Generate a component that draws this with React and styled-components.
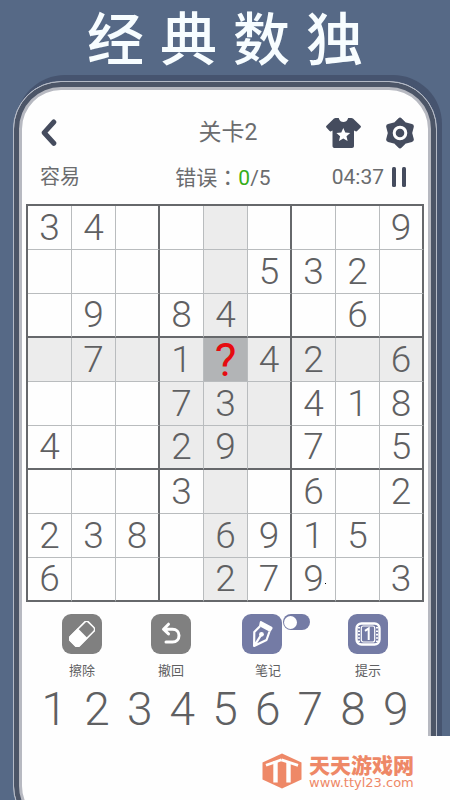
import React, { useState } from "react";
import styled, { createGlobalStyle, css } from "styled-components";

const ink = "#454c5e";
const gray = "#5f6062";
const sans = `Roboto, "Noto Sans CJK SC", sans-serif`;

const GlobalStyle = createGlobalStyle`
  *, *::before, *::after { box-sizing: border-box; }
  body { margin: 0; background: #566986; font-family: ${sans}; color: ${gray}; }
  button { margin: 0; padding: 0; border: 0; background: none; color: inherit; font: inherit; cursor: pointer; }
  svg { display: block; }
`;

const Page = styled.main`
  position: relative;
  display: flex;
  flex-direction: column;
  min-height: 100vh;
  overflow: hidden;
`;

const Headline = styled.h1`
  display: flex;
  justify-content: center;
  gap: 16px;
  margin: 0;
  height: 81px;
  font: 500 57px/70px "Noto Sans CJK SC", sans-serif;
  color: #f7fdff;
`;

const Phone = styled.section`
  flex: 1;
  margin: 0 13px -34px;
  padding: 8px;
  border: 1px solid #b3b9c6;
  border-radius: 48px;
  background: #fefefe;
  box-shadow: inset 0 0 0 5px #4c5567, inset 0 0 0 8px #b7b9c1, 4px -5px 0 1px #46546f;
`;

const Screen = styled.div`
  display: flex;
  flex-direction: column;
  padding: 20px 4px 63px;
`;

const Bar = styled.header`
  display: grid;
  grid-template-columns: 1fr auto 1fr;
  align-items: center;
  height: 45px;
  padding: 0 9px 0 15px;
`;

const LevelName = styled.h2`
  margin: 0;
  font: 400 23px/32px ${sans};
  color: #6b6c6e;
`;

const IconButton = styled.button`
  display: grid;
  place-items: center;
`;

const BackButton = styled(IconButton)`
  justify-self: start;
`;

const Actions = styled.div`
  display: flex;
  justify-content: flex-end;
  align-items: center;
  gap: 24px;
`;

const Status = styled.div`
  display: grid;
  grid-template-columns: 1fr auto 1fr;
  align-items: center;
  height: 44px;
  margin-bottom: 5px;
  padding: 0 18px 0 14px;
  font-size: 20px;
  line-height: 28px;
  color: #6b6c6e;
`;

const Mistakes = styled.span`
  font-size: 21px;
`;

const Colon = styled.span`
  font-family: "Noto Sans CJK TC", sans-serif;
`;

const Count = styled.span`
  color: #35ad18;
`;

const Timer = styled.div`
  display: flex;
  justify-content: flex-end;
  align-items: center;
  gap: 8px;
  font-size: 21px;
`;

const Board = styled.div`
  display: grid;
  grid-template-columns: repeat(9, 1fr);
  border-top: 2px solid #66686b;
  border-left: 2px solid #66686b;
`;

const Cell = styled.button`
  position: relative;
  aspect-ratio: 1;
  display: grid;
  place-items: center;
  min-width: 0;
  border-style: solid;
  border-color: ${(p) => `#b9bcbe ${p.$edgeX ? "#66686b" : "#b9bcbe"} ${p.$edgeY ? "#66686b" : "#b9bcbe"}`};
  border-width: 0 ${(p) => (p.$edgeX ? 2 : 1)}px ${(p) => (p.$edgeY ? 2 : 1)}px 0;
  background: ${(p) => (p.$selected ? "#b2b4b6" : p.$shaded ? "#ececec" : "#fefefe")};
  font-size: 37px;
  line-height: 40px;
  font-weight: 300;
  ${(p) =>
    p.$selected &&
    css`
      color: #e60b10;
      font-size: 46px;
      font-weight: 400;
    `}
`;

const Dot = styled.i`
  position: absolute;
  right: 9px;
  bottom: 16px;
  width: 1px;
  height: 1px;
  background: #000;
`;

const Tools = styled.div`
  display: grid;
  grid-template-columns: 90fr 88fr 106fr 94fr;
  padding: 12px 9px 0 11px;
`;

const Tool = styled.div`
  position: relative;
  justify-self: center;
  width: ${(p) => (p.$wide ? 52 : 40)}px;
`;

const ToolButton = styled.button`
  display: flex;
  flex-direction: column;
  gap: 9px;
  width: 100%;
`;

const Tile = styled.span`
  display: grid;
  place-items: center;
  width: 40px;
  height: 40px;
  border-radius: 9px;
  background: ${(p) => (p.$accent ? "#747ba5" : "#808080")};
`;

const ToolName = styled.span`
  width: 100%;
  text-align: center;
  font-size: 13px;
  line-height: 16px;
`;

const Switch = styled.input`
  appearance: none;
  position: absolute;
  top: 0;
  left: 41px;
  display: flex;
  align-items: center;
  width: 27px;
  height: 16px;
  margin: 0;
  padding: 0 1px;
  border-radius: 8px;
  background: #747ba5;
  cursor: pointer;
  &::before {
    content: "";
    width: 13px;
    height: 13px;
    border-radius: 50%;
    background: #fff;
  }
  &:checked { justify-content: flex-end; }
`;

const Keypad = styled.div`
  display: grid;
  grid-template-columns: repeat(9, 1fr);
  padding: 3px 7px 0;
`;

const Key = styled.button`
  font-size: 46px;
  line-height: 55px;
  font-weight: 300;
`;

const SiteMark = styled.a`
  position: absolute;
  right: 0;
  bottom: 0;
  display: flex;
  align-items: center;
  gap: 7px;
  height: 64px;
  padding: 6px 36px 0 12px;
  background: #fefefe;
  color: #ee8867;
  text-decoration: none;
`;

const SiteText = styled.span`
  display: flex;
  flex-direction: column;
`;

const SiteName = styled.strong`
  font: 900 21px/22px "Noto Sans CJK SC", sans-serif;
`;

const SiteUrl = styled.span`
  font: 400 13px/15px "DejaVu Sans", sans-serif;
`;

const BackIcon = () => (
  <svg width="16" height="28" viewBox="0 0 16 28" fill="none" stroke={ink} strokeWidth="5" strokeLinecap="round" strokeLinejoin="round">
    <path d="M12.800 3 3.200 13.700l9.600 10.600" />
  </svg>
);

const ShirtIcon = () => (
  <svg width="35" height="30" viewBox="0 0 35 30">
    <path fill={ink} d="M9.500 0h3.200c1 3 2.600 4 4.700 4s3.800-1 4.800-4h3.200l1.600.6 7.500 7.200c.6.6.6 1 .1 1.600l-3.500 3.700c-.5.5-1 .5-1.500.2L28 12.400V28c0 1.200-.8 2-2 2H8.500c-1.200 0-2-.8-2-2V12.400l-1.400.9c-.5.3-1 .3-1.500-.2L.4 9.400c-.5-.6-.5-1 .1-1.600L8 .6z" />
    <path fill="#fff" d="m17.300 9.900 2 4.500 4.900.5-3.700 3.300 1.100 4.800-4.300-2.500-4.300 2.500 1.100-4.800-3.700-3.300 4.900-.5z" />
  </svg>
);

const GearIcon = () => (
  <svg width="30" height="32" viewBox="0 0 30 32">
    <path
      fill={ink}
      stroke={ink}
      strokeWidth="5"
      strokeLinejoin="round"
      d="M15 3.200 19.500 7.700 26.300 9.500 24.600 16 26.300 22.500 19.500 24.300 15 28.800 10.500 24.300 3.700 22.500 5.400 16 3.700 9.500 10.500 7.700z"
    />
    <circle cx="15" cy="16" r="5.800" fill={ink} stroke="#fff" strokeWidth="3" />
  </svg>
);

const PauseIcon = () => (
  <svg width="14" height="20" viewBox="0 0 14 20" fill={ink}>
    <rect width="4" height="20" rx="1.500" />
    <rect x="10" width="4" height="20" rx="1.500" />
  </svg>
);

const EraserIcon = () => (
  <svg width="26" height="26" viewBox="0 0 26 26">
    <g transform="rotate(-45 13 13)">
      <rect x="0" y="6.500" width="26" height="13" rx="3" fill="none" stroke="#fff" strokeWidth="1.600" />
      <path fill="#fff" d="M3 6h11v14H3c-2 0-3.500-1.300-3.500-3V9C-.5 7.300 1 6 3 6z" />
    </g>
  </svg>
);

const UndoIcon = () => (
  <svg width="22" height="24" viewBox="0 0 22 24" fill="none" stroke="#fff" strokeWidth="3" strokeLinecap="round" strokeLinejoin="round">
    <path d="M8.500 2.200 3.500 7.200l5 4.700M4 7.200h8.500c4 0 6.500 2.700 6.500 6.300s-2.500 6.500-6.500 6.500H6" />
  </svg>
);

const PenIcon = () => (
  <svg width="24" height="28" viewBox="-1.500 0 24 28">
    <path fill="#fff" d="m10 1.200 10.300 5.600c1 .6 1 1.800.2 2.700l-1.800 2.500L7.500 6l.8-3.900c.1-1 .9-1.300 1.700-.9z" />
    <path fill="none" stroke="#fff" strokeWidth="2.200" strokeLinejoin="round" d="M8.500 6.300 2.800 12 2.600 26l12.400-6 3-8.500M3 25.500l6.500-10.300" />
    <circle cx="10" cy="14.300" r="2.400" fill="#fff" />
  </svg>
);

const HintIcon = () => (
  <svg width="26" height="24" viewBox="0 0 26 24">
    <rect x="1.500" y="1.500" width="23" height="21" rx="5" fill="none" stroke="#fff" strokeWidth="2.400" />
    <path d="M4 5v15M22 5v15" stroke="#fff" strokeWidth="2" strokeDasharray="1.600 1.800" />
    <rect x="6.300" y="4" width="13.400" height="16" rx="2" fill="none" stroke="#fff" strokeWidth="1.200" />
    <path d="M10 8.800 13.700 6.400V18" fill="none" stroke="#fff" strokeWidth="2" />
  </svg>
);

const SiteLogo = () => (
  <svg width="40" height="36" viewBox="0 0 40 36">
    <path fill="#ee8867" d="M20 .5 39.500 9.500v17L20 35.500.5 26.500v-17z" />
    <g fill="none" stroke="#fefefe">
      <path strokeWidth="2.800" d="M4 12.300 19.500 6.800" />
      <path strokeWidth="4.400" d="M13.500 8v21.500" />
      <path strokeWidth="2.800" d="M19.500 6.800 36 12.300" />
      <path strokeWidth="4.400" d="M26.500 9v20.500" />
    </g>
  </svg>
);

const puzzle = [
  "34......9",
  ".....532.",
  ".9.84..6.",
  ".7.1?42.6",
  "...73.418",
  "4..29.7.5",
  "...3..6.2",
  "238.6915.",
  "6...279.3",
];

const isShaded = (r, c) => r === 3 || c === 4 || (r > 2 && r < 6 && c > 2 && c < 6);

export default function App() {
  const [notes, setNotes] = useState(false);
  return (
    <>
      <GlobalStyle />
      <Page lang="zh-CN">
        <Headline>
          {[..."经典数独"].map((ch) => (
            <span key={ch}>{ch}</span>
          ))}
        </Headline>
        <Phone>
          <Screen>
            <Bar>
              <BackButton aria-label="返回"><BackIcon /></BackButton>
              <LevelName>关卡2</LevelName>
              <Actions>
                <IconButton aria-label="主题"><ShirtIcon /></IconButton>
                <IconButton aria-label="设置"><GearIcon /></IconButton>
              </Actions>
            </Bar>
            <Status>
              <span>容易</span>
              <Mistakes>错误<Colon lang="zh-TW">：</Colon><Count>0</Count>/5</Mistakes>
              <Timer>
                <span>04:37</span>
                <IconButton aria-label="暂停"><PauseIcon /></IconButton>
              </Timer>
            </Status>
            <Board>
              {puzzle.flatMap((row, r) =>
                [...row].map((v, c) => (
                  <Cell
                    key={`${r}-${c}`}
                    aria-label={`${r + 1}行${c + 1}列 ${v === "." ? "" : v}`}
                    $edgeX={c % 3 === 2}
                    $edgeY={r % 3 === 2}
                    $shaded={isShaded(r, c)}
                    $selected={v === "?"}
                  >
                    {v === "." ? "" : v}
                    {r === 8 && c === 6 && <Dot />}
                  </Cell>
                ))
              )}
            </Board>
            <Tools>
              <Tool>
                <ToolButton><Tile><EraserIcon /></Tile><ToolName>擦除</ToolName></ToolButton>
              </Tool>
              <Tool>
                <ToolButton><Tile><UndoIcon /></Tile><ToolName>撤回</ToolName></ToolButton>
              </Tool>
              <Tool $wide>
                <ToolButton><Tile $accent><PenIcon /></Tile><ToolName>笔记</ToolName></ToolButton>
                <Switch
                  type="checkbox"
                  role="switch"
                  aria-label="笔记"
                  checked={notes}
                  onChange={(e) => setNotes(e.target.checked)}
                />
              </Tool>
              <Tool>
                <ToolButton><Tile $accent><HintIcon /></Tile><ToolName>提示</ToolName></ToolButton>
              </Tool>
            </Tools>
            <Keypad>
              {[1, 2, 3, 4, 5, 6, 7, 8, 9].map((n) => (
                <Key key={n}>{n}</Key>
              ))}
            </Keypad>
          </Screen>
        </Phone>
        <SiteMark href="#">
          <SiteLogo />
          <SiteText>
            <SiteName>天天游戏网</SiteName>
            <SiteUrl>www.ttyl23.com</SiteUrl>
          </SiteText>
        </SiteMark>
      </Page>
    </>
  );
}
